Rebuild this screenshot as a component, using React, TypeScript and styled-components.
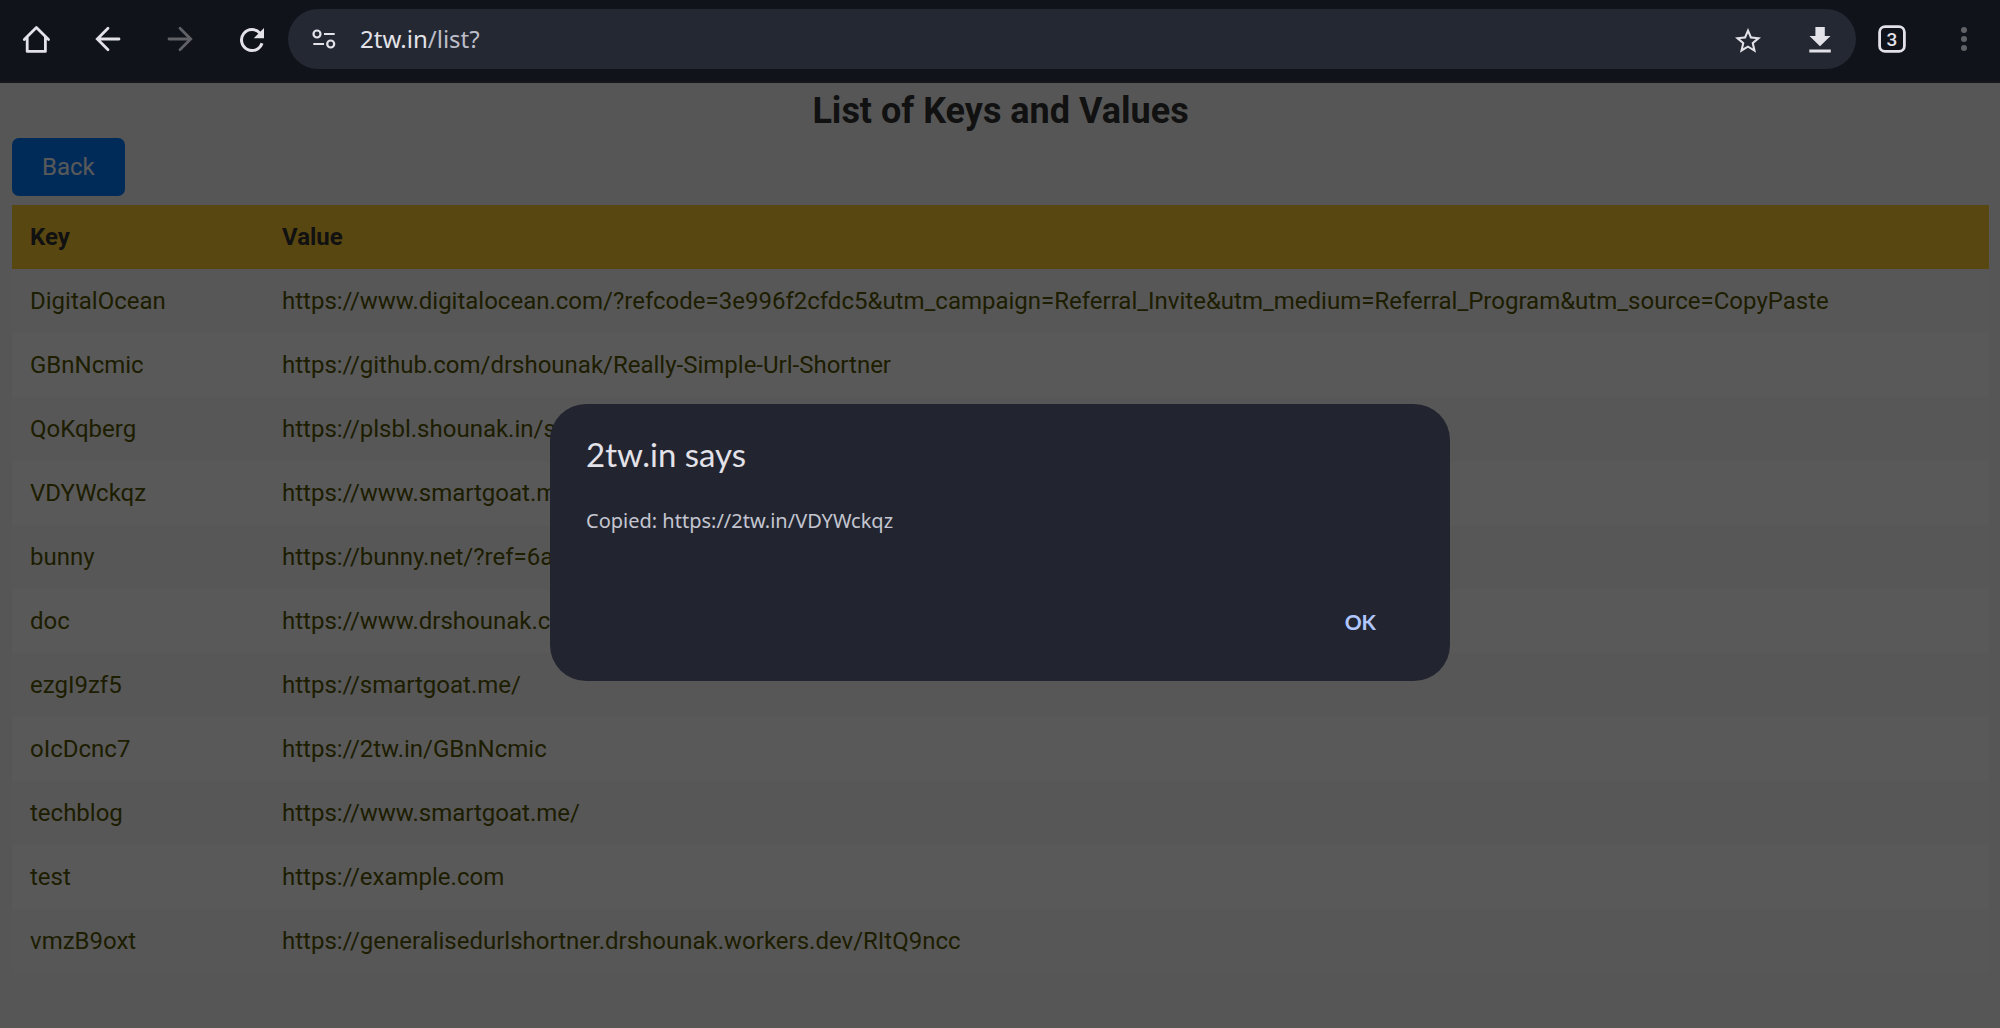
import React from 'react';
import styled, { createGlobalStyle } from 'styled-components';

const GlobalStyle = createGlobalStyle`
  *, *::before, *::after { box-sizing: border-box; }
  body {
    margin: 0;
    background: #f7f7f7;
    font-family: Roboto, 'Liberation Sans', sans-serif;
  }
`;

const Screen = styled.div`
  display: flex;
  flex-direction: column;
  min-height: 100vh;
`;

const Toolbar = styled.header`
  display: flex;
  align-items: center;
  height: 83px;
  padding: 9px 0 12px;
  background: #10131a;
  border-bottom: 2px solid #14171b;
`;

const IconButton = styled.button<{ $muted?: boolean }>`
  display: flex;
  flex: none;
  align-items: center;
  justify-content: center;
  width: 72px;
  height: 60px;
  padding: 0;
  border: 0;
  background: none;
  color: ${(p) => (p.$muted ? '#616267' : '#e3e2e9')};
`;

const AddressBar = styled.div`
  display: flex;
  flex: 1;
  align-items: center;
  height: 60px;
  border-radius: 30px;
  background: #242833;
`;

const Address = styled.div`
  flex: 1;
  color: #bcbdc8;
  font-family: 'Noto Sans', sans-serif;
  font-size: 24px;
  line-height: 32px;
`;

const Host = styled.span`
  color: #e3e2e9;
`;

const Page = styled.main`
  position: relative;
  display: flex;
  flex: 1;
  flex-direction: column;
  align-items: flex-start;
  padding: 7px 11px 54px 12px;
`;

const Title = styled.h1`
  align-self: stretch;
  margin: 0 0 5px;
  color: #333;
  font-size: 36px;
  font-weight: 700;
  line-height: 43px;
  text-align: center;
`;

const BackButton = styled.button`
  height: 58px;
  margin-bottom: 9px;
  padding: 0 30px;
  border: 0;
  border-radius: 7px;
  background: #007bff;
  color: #fff;
  font-family: inherit;
  font-size: 24px;
`;

const Table = styled.table`
  width: 100%;
  border-collapse: collapse;
  table-layout: fixed;
  font-size: 24px;
  line-height: 28px;
`;

const HeadCell = styled.th<{ $narrow?: boolean }>`
  width: ${(p) => (p.$narrow ? '252px' : 'auto')};
  padding: 18px;
  background: #fc3;
  color: #333;
  font-weight: 700;
  text-align: left;
`;

const Row = styled.tr`
  background: #fff;
  &:nth-child(odd) { background: #f9f9f9; }
`;

const Cell = styled.td`
  padding: 18px;
  color: #550;
  white-space: nowrap;
`;

const Backdrop = styled.div`
  position: absolute;
  inset: 0;
  display: flex;
  align-items: center;
  justify-content: center;
  padding-bottom: 26px;
  background: rgba(0, 0, 0, 0.65);
`;

const Dialog = styled.section`
  display: flex;
  flex-direction: column;
  width: 45%;
  padding: 29px 36px 24px;
  border-radius: 36px;
  background: #222530;
`;

const DialogTitle = styled.h2`
  margin: 0 0 28px;
  color: #e3e2e9;
  font-family: Lato, sans-serif;
  font-size: 33px;
  font-weight: 400;
  line-height: 42px;
`;

const Message = styled.p`
  margin: 0 0 46px;
  color: #c4c5d0;
  font-family: 'Noto Sans', sans-serif;
  font-size: 20px;
  line-height: 36px;
`;

const OkButton = styled.button`
  align-self: flex-end;
  height: 72px;
  padding: 0 38px;
  border: 0;
  background: none;
  color: #b0c6ff;
  font-family: Lato, sans-serif;
  font-size: 21px;
  font-weight: 700;
`;

const TabText = styled.text`
  font-family: Roboto, sans-serif;
  font-size: 19px;
  font-weight: 500;
`;

const rows = [
  ['DigitalOcean', 'https://www.digitalocean.com/?refcode=3e996f2cfdc5&utm_campaign=Referral_Invite&utm_medium=Referral_Program&utm_source=CopyPaste'],
  ['GBnNcmic', 'https://github.com/drshounak/Really-Simple-Url-Shortner'],
  ['QoKqberg', 'https://plsbl.shounak.in/s'],
  ['VDYWckqz', 'https://www.smartgoat.m'],
  ['bunny', 'https://bunny.net/?ref=6a'],
  ['doc', 'https://www.drshounak.c'],
  ['ezgI9zf5', 'https://smartgoat.me/'],
  ['oIcDcnc7', 'https://2tw.in/GBnNcmic'],
  ['techblog', 'https://www.smartgoat.me/'],
  ['test', 'https://example.com'],
  ['vmzB9oxt', 'https://generalisedurlshortner.drshounak.workers.dev/RItQ9ncc'],
];

const Icon = ({ children }: { children: React.ReactNode }) => (
  <svg width="36" height="36" viewBox="0 0 36 36" fill="none" stroke="currentColor" strokeWidth="2.8" aria-hidden="true">
    {children}
  </svg>
);

export default function App() {
  return (
    <Screen>
      <GlobalStyle />
      <Toolbar>
        <IconButton aria-label="Home">
          <Icon>
            <path d="M6.3 18.6 18.4 6.6 30.5 18.6M9.2 16V30.4H27.4V16" strokeLinejoin="round" strokeLinecap="round" />
          </Icon>
        </IconButton>
        <IconButton aria-label="Back">
          <Icon>
            <path d="M29 18H7.5M18 7.3 7.3 18 18 28.7" strokeLinecap="round" />
          </Icon>
        </IconButton>
        <IconButton aria-label="Forward" $muted>
          <Icon>
            <path d="M7 18H28.5M18 7.3 28.7 18 18 28.7" strokeLinecap="round" />
          </Icon>
        </IconButton>
        <IconButton aria-label="Reload">
          <Icon>
            <path d="M26 12.2A10.5 10.5 0 1 0 28 22.3" strokeWidth="3" />
            <path d="M30 7V17.3H19.7Z" fill="currentColor" stroke="none" />
          </Icon>
        </IconButton>
        <AddressBar>
          <IconButton aria-label="Site settings">
            <Icon>
              <circle cx="11" cy="13" r="3.5" strokeWidth="2.2" />
              <circle cx="24.7" cy="23" r="3.5" strokeWidth="2.2" />
              <path d="M18 13H28.7M7.3 23H18" strokeWidth="2.2" />
            </Icon>
          </IconButton>
          <Address>
            <Host>2tw.in</Host>/list?
          </Address>
          <IconButton aria-label="Bookmark">
            <Icon>
              <path
                transform="translate(2.4 4.4) scale(1.3)"
                d="m22 9.24-7.19-.62L12 2 9.19 8.63 2 9.24l5.46 4.73L5.82 21 12 17.27 18.18 21l-1.63-7.03L22 9.24zM12 15.4l-3.76 2.27 1-4.28-3.32-2.88 4.38-.38L12 6.1l1.71 4.04 4.38.38-3.32 2.88 1 4.28L12 15.4z"
                fill="currentColor"
                stroke="none"
              />
            </Icon>
          </IconButton>
          <IconButton aria-label="Download">
            <Icon>
              <path d="M13.4 6H22.8V15H28.5L18 25.3 7.5 15H13.4Z" fill="currentColor" stroke="none" />
              <path d="M7.3 30H28.8" strokeWidth="3" />
            </Icon>
          </IconButton>
        </AddressBar>
        <IconButton aria-label="Tabs">
          <Icon>
            <rect x="5.6" y="5.6" width="24.8" height="24.8" rx="5.5" />
            <TabText x="18" y="25" textAnchor="middle" fill="currentColor" stroke="none">3</TabText>
          </Icon>
        </IconButton>
        <IconButton aria-label="Menu" $muted>
          <Icon>
            <g fill="currentColor" stroke="none">
              <circle cx="18" cy="9" r="3" />
              <circle cx="18" cy="18" r="3" />
              <circle cx="18" cy="27" r="3" />
            </g>
          </Icon>
        </IconButton>
      </Toolbar>
      <Page>
        <Title>List of Keys and Values</Title>
        <BackButton>Back</BackButton>
        <Table>
          <thead>
            <tr>
              <HeadCell $narrow>Key</HeadCell>
              <HeadCell>Value</HeadCell>
            </tr>
          </thead>
          <tbody>
            {rows.map(([key, value]) => (
              <Row key={key}>
                <Cell>{key}</Cell>
                <Cell>{value}</Cell>
              </Row>
            ))}
          </tbody>
        </Table>
        <Backdrop>
          <Dialog role="alertdialog" aria-labelledby="alert-title" aria-describedby="alert-message">
            <DialogTitle id="alert-title">2tw.in says</DialogTitle>
            <Message id="alert-message">Copied: https://2tw.in/VDYWckqz</Message>
            <OkButton>OK</OkButton>
          </Dialog>
        </Backdrop>
      </Page>
    </Screen>
  );
}
